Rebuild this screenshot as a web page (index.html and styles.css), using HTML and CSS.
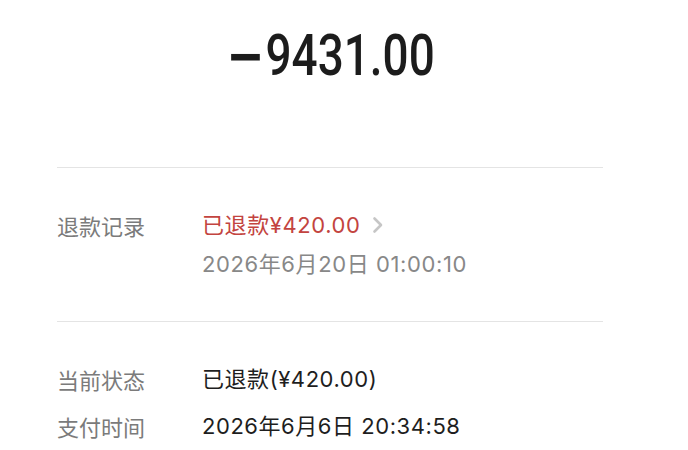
FILE: index.html
```html
<!DOCTYPE html>
<html lang="zh-CN">
<head>
<meta charset="utf-8">
<link rel="stylesheet" href="styles.css">
</head>
<body>
<div class="page">
  <div class="amount"><span class="amount-text"><span class="minus">−</span>9431.00</span></div>
  <div class="divider"></div>
  <div class="section refund">
    <div class="row">
      <div class="label">退款记录</div>
      <div class="value-col">
        <div class="refund-line">
          <span class="red">已退款¥420.00</span>
          <svg class="chev" width="12" height="18" viewBox="0 0 12 18"><path d="M2.5 2.5 L9 9 L2.5 15.5" fill="none" stroke="#c6c6c6" stroke-width="2.6" stroke-linecap="round" stroke-linejoin="round"/></svg>
        </div>
        <div class="date">2026年6月20日 01:00:10</div>
      </div>
    </div>
  </div>
  <div class="divider"></div>
  <div class="section info">
    <div class="row">
      <div class="label">当前状态</div>
      <div class="value">已退款(¥420.00)</div>
    </div>
    <div class="row">
      <div class="label">支付时间</div>
      <div class="value">2026年6月6日 20:34:58</div>
    </div>
  </div>
</div>
</body>
</html>
```
FILE: styles.css
```css
html, body {
  margin: 0;
  padding: 0;
  background: #ffffff;
}
body {
  font-family: "Inter", "Noto Sans CJK SC", sans-serif;
  width: 688px;
  height: 450px;
  overflow: hidden;
}
.page {
  width: 546px;
  margin-left: 57px;
}
.amount {
  margin-top: 23px;
  height: 64px;
  line-height: 64px;
  text-align: center;
  font-family: "Roboto", sans-serif;
  font-weight: 500;
  font-size: 57px;
  color: #1c1c1c;
}
.amount-text {
  display: inline-block;
  transform: scaleX(0.805);
}
.minus {
  font-family: "DejaVu Sans", sans-serif;
  font-weight: bold;
  margin-right: 1px;
}
.divider {
  height: 1px;
  background: #e4e4e4;
}
.amount + .divider {
  margin-top: 80px;
}
.section.refund {
  padding-top: 41px;
  padding-bottom: 41px;
}
.section.info {
  padding-top: 41px;
  display: flex;
  flex-direction: column;
  gap: 15px;
}
.row {
  display: flex;
  align-items: flex-start;
}
.label {
  width: 145px;
  flex: none;
  font-family: "Noto Sans CJK SC", sans-serif;
  font-size: 22px;
  line-height: 32px;
  color: #7b7b7b;
}
.value-col {
  display: flex;
  flex-direction: column;
  gap: 7px;
}
.refund-line {
  display: flex;
  align-items: center;
  gap: 11px;
  height: 32px;
}
.red {
  font-size: 22px;
  line-height: 32px;
  letter-spacing: 0.6px;
  color: #c34440;
}
.chev {
  display: block;
}
.date {
  font-size: 22px;
  line-height: 32px;
  letter-spacing: 0.6px;
  color: #888888;
}
.value {
  font-size: 22px;
  line-height: 32px;
  letter-spacing: 0.55px;
  color: #1e1e1e;
}
```
